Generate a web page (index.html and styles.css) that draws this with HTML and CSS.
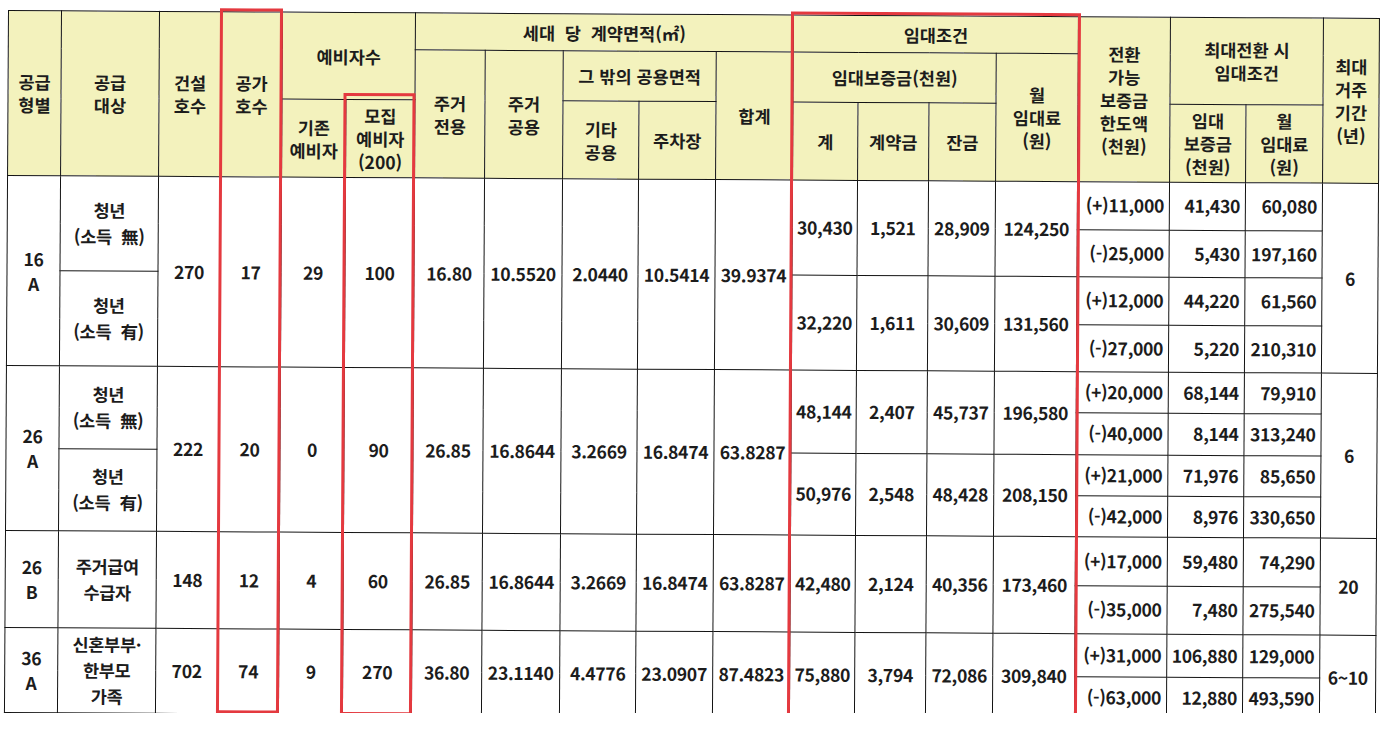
FILE: index.html
```html
<!DOCTYPE html>
<html lang="ko">
<head>
<meta charset="utf-8">
<title>공급 대상 및 임대조건</title>
<link rel="stylesheet" href="styles.css">
</head>
<body>
<div class="sheet">
  <table class="grid">
    <colgroup>
      <col class="c1"><col class="c2"><col class="c3"><col class="c4"><col class="c5"><col class="c6">
      <col class="c7"><col class="c8"><col class="c9"><col class="c10"><col class="c11">
      <col class="c12"><col class="c13"><col class="c14"><col class="c15">
      <col class="c16"><col class="c17"><col class="c18"><col class="c19">
    </colgroup>
    <thead>
      <tr class="h1">
        <th rowspan="3">공급<br>형별</th>
        <th rowspan="3">공급<br>대상</th>
        <th rowspan="3">건설<br>호수</th>
        <th rowspan="3">공가<br>호수</th>
        <th colspan="2" rowspan="2">예비자수</th>
        <th colspan="5" class="wide">세대&nbsp; 당&nbsp; 계약면적(㎡)</th>
        <th colspan="4">임대조건</th>
        <th rowspan="3">전환<br>가능<br>보증금<br>한도액<br>(천원)</th>
        <th colspan="2" rowspan="2">최대전환 시<br>임대조건</th>
        <th rowspan="3">최대<br>거주<br>기간<br>(년)</th>
      </tr>
      <tr class="h2">
        <th rowspan="2">주거<br>전용</th>
        <th rowspan="2">주거<br>공용</th>
        <th colspan="2">그 밖의 공용면적</th>
        <th rowspan="2">합계</th>
        <th colspan="3">임대보증금(천원)</th>
        <th rowspan="2">월<br>임대료<br>(원)</th>
      </tr>
      <tr class="h3">
        <th>기존<br>예비자</th>
        <th>모집<br>예비자<br>(200)</th>
        <th>기타<br>공용</th>
        <th>주차장</th>
        <th>계</th>
        <th>계약금</th>
        <th>잔금</th>
        <th>임대<br>보증금<br>(천원)</th>
        <th>월<br>임대료<br>(원)</th>
      </tr>
    </thead>
    <tbody>
      <tr class="r16">
        <td rowspan="4" class="type">16<br>A</td>
        <td rowspan="2">청년<br>(소득&nbsp; 無)</td>
        <td rowspan="4">270</td>
        <td rowspan="4">17</td>
        <td rowspan="4">29</td>
        <td rowspan="4">100</td>
        <td rowspan="4">16.80</td>
        <td rowspan="4">10.5520</td>
        <td rowspan="4">2.0440</td>
        <td rowspan="4">10.5414</td>
        <td rowspan="4">39.9374</td>
        <td rowspan="2">30,430</td>
        <td rowspan="2">1,521</td>
        <td rowspan="2">28,909</td>
        <td rowspan="2">124,250</td>
        <td class="num">(+)11,000</td>
        <td class="num">41,430</td>
        <td class="num">60,080</td>
        <td rowspan="4">6</td>
      </tr>
      <tr class="r16">
        <td class="num">(-)25,000</td>
        <td class="num">5,430</td>
        <td class="num">197,160</td>
      </tr>
      <tr class="r16">
        <td rowspan="2">청년<br>(소득&nbsp; 有)</td>
        <td rowspan="2">32,220</td>
        <td rowspan="2">1,611</td>
        <td rowspan="2">30,609</td>
        <td rowspan="2">131,560</td>
        <td class="num">(+)12,000</td>
        <td class="num">44,220</td>
        <td class="num">61,560</td>
      </tr>
      <tr class="r16">
        <td class="num">(-)27,000</td>
        <td class="num">5,220</td>
        <td class="num">210,310</td>
      </tr>
      <tr class="r26a">
        <td rowspan="4" class="type">26<br>A</td>
        <td rowspan="2">청년<br>(소득&nbsp; 無)</td>
        <td rowspan="4">222</td>
        <td rowspan="4">20</td>
        <td rowspan="4">0</td>
        <td rowspan="4">90</td>
        <td rowspan="4">26.85</td>
        <td rowspan="4">16.8644</td>
        <td rowspan="4">3.2669</td>
        <td rowspan="4">16.8474</td>
        <td rowspan="4">63.8287</td>
        <td rowspan="2">48,144</td>
        <td rowspan="2">2,407</td>
        <td rowspan="2">45,737</td>
        <td rowspan="2">196,580</td>
        <td class="num">(+)20,000</td>
        <td class="num">68,144</td>
        <td class="num">79,910</td>
        <td rowspan="4">6</td>
      </tr>
      <tr class="r26a">
        <td class="num">(-)40,000</td>
        <td class="num">8,144</td>
        <td class="num">313,240</td>
      </tr>
      <tr class="r26a">
        <td rowspan="2">청년<br>(소득&nbsp; 有)</td>
        <td rowspan="2">50,976</td>
        <td rowspan="2">2,548</td>
        <td rowspan="2">48,428</td>
        <td rowspan="2">208,150</td>
        <td class="num">(+)21,000</td>
        <td class="num">71,976</td>
        <td class="num">85,650</td>
      </tr>
      <tr class="r26a">
        <td class="num">(-)42,000</td>
        <td class="num">8,976</td>
        <td class="num">330,650</td>
      </tr>
      <tr class="r26b">
        <td rowspan="2" class="type">26<br>B</td>
        <td rowspan="2">주거급여<br>수급자</td>
        <td rowspan="2">148</td>
        <td rowspan="2">12</td>
        <td rowspan="2">4</td>
        <td rowspan="2">60</td>
        <td rowspan="2">26.85</td>
        <td rowspan="2">16.8644</td>
        <td rowspan="2">3.2669</td>
        <td rowspan="2">16.8474</td>
        <td rowspan="2">63.8287</td>
        <td rowspan="2">42,480</td>
        <td rowspan="2">2,124</td>
        <td rowspan="2">40,356</td>
        <td rowspan="2">173,460</td>
        <td class="num">(+)17,000</td>
        <td class="num">59,480</td>
        <td class="num">74,290</td>
        <td rowspan="2">20</td>
      </tr>
      <tr class="r26b">
        <td class="num">(-)35,000</td>
        <td class="num">7,480</td>
        <td class="num">275,540</td>
      </tr>
      <tr class="r36">
        <td rowspan="2" class="type">36<br>A</td>
        <td rowspan="2">신혼부부·<br>한부모<br>가족</td>
        <td rowspan="2">702</td>
        <td rowspan="2">74</td>
        <td rowspan="2">9</td>
        <td rowspan="2">270</td>
        <td rowspan="2">36.80</td>
        <td rowspan="2">23.1140</td>
        <td rowspan="2">4.4776</td>
        <td rowspan="2">23.0907</td>
        <td rowspan="2">87.4823</td>
        <td rowspan="2">75,880</td>
        <td rowspan="2">3,794</td>
        <td rowspan="2">72,086</td>
        <td rowspan="2">309,840</td>
        <td class="num">(+)31,000</td>
        <td class="num">106,880</td>
        <td class="num">129,000</td>
        <td rowspan="2">6~10</td>
      </tr>
      <tr class="r36">
        <td class="num">(-)63,000</td>
        <td class="num">12,880</td>
        <td class="num">493,590</td>
      </tr>
    </tbody>
  </table>
  <div class="mark mark-vacant"></div>
  <div class="mark mark-recruit"></div>
  <div class="mark mark-lease"></div>
</div>
</body>
</html>
```

FILE: styles.css
```css
html, body {
  margin: 0;
  padding: 0;
  background: #ffffff;
}

body {
  font-family: "Noto Sans CJK KR", "Noto Sans", sans-serif;
  color: #1c1c1c;
}

.sheet {
  position: relative;
  width: 1371px;
  margin: 10px 0 0 8px;
  transform: rotate(0.33deg);
  transform-origin: 0 0;
}

.grid {
  width: 1371px;
  table-layout: fixed;
  border-collapse: collapse;
  font-size: 17.5px;
  font-weight: 700;
}

.c1 { width: 53px; }
.c2 { width: 98px; }
.c3 { width: 62px; }
.c4 { width: 61px; }
.c5 { width: 64px; }
.c6 { width: 69px; }
.c7 { width: 70px; }
.c8 { width: 78px; }
.c9 { width: 76px; }
.c10 { width: 77px; }
.c11 { width: 77px; }
.c12 { width: 65px; }
.c13 { width: 71px; }
.c14 { width: 67px; }
.c15 { width: 82px; }
.c16 { width: 92px; }
.c17 { width: 76px; }
.c18 { width: 77px; }
.c19 { width: 56px; }

.grid th,
.grid td {
  border: 1px solid #141414;
  padding: 0 2px;
  text-align: center;
  vertical-align: middle;
  overflow: hidden;
  white-space: nowrap;
}

.grid th {
  background: #f3f2bd;
  line-height: 23px;
  font-weight: 700;
}

.grid td {
  background: #ffffff;
  line-height: 26px;
  letter-spacing: -0.3px;
}

.grid td.num {
  text-align: right;
  padding-right: 5px;
}

.grid td.type {
  line-height: 25px;
}

.h1 { height: 37px; }
.h2 { height: 50px; }
.h3 { height: 78px; }

.r16 { height: 47.5px; }
.r26a { height: 41.25px; }
.r26b { height: 48.5px; }
.r36 { height: 42.5px; }

.mark {
  position: absolute;
  box-sizing: border-box;
  border: 3px solid #e4393f;
  pointer-events: none;
}

.mark-vacant {
  left: 212px;
  top: -3px;
  width: 63px;
  height: 705px;
}

.mark-recruit {
  left: 336px;
  top: 81px;
  width: 72px;
  height: 622px;
}

.mark-lease {
  left: 783px;
  top: -3px;
  width: 290px;
  height: 708px;
}
```
